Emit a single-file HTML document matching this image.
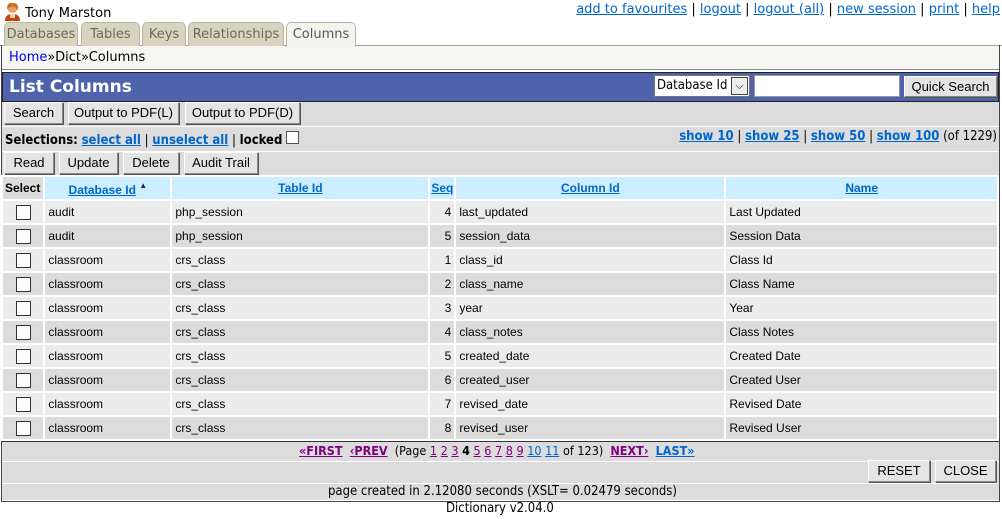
<!DOCTYPE html>
<html><head><meta charset="utf-8"><style>
*{margin:0;padding:0;box-sizing:border-box}
body{width:1002px;height:519px;background:#fff;position:relative;overflow:hidden;font-family:"DejaVu Sans",Verdana,sans-serif;font-size:13px;color:#000}
.a{position:absolute}
a{color:#0066cc;text-decoration:underline}
.tab{position:absolute;top:22px;height:24px;background:#d8d4c0;border:1px solid #b8b4a0;border-bottom:none;border-radius:5px 5px 0 0;color:#6e6a5a;font-size:13px;text-align:center;line-height:23px}
.btn{position:absolute;height:22px;background:#e4e4e4;border:1px solid #888;border-top-color:#fff;border-left-color:#fff;box-shadow:1px 1px 0 #555;font-family:"Liberation Sans",Arial,sans-serif;font-size:13px;text-align:center;line-height:20px}
table{border-collapse:separate;border-spacing:2px;font-family:"Liberation Sans",Arial,sans-serif;font-size:12px}
td,th{height:22px;padding:0 3px}
th{background:#cceeff;font-weight:bold}
th a{color:#0066cc}
tr.o td{background:#ececec}
tr.e td{background:#dcdcdc}
.cb{display:inline-block;width:15px;height:15px;background:#fff;border:1px solid #333;vertical-align:middle}
.cond{font-family:"DejaVu Sans Condensed","DejaVu Sans",sans-serif}
.p{color:#800080}
</style></head><body>
<svg class="a" style="left:4px;top:2px" width="17" height="19" viewBox="0 0 17 19"><circle cx="8.5" cy="6" r="5" fill="#e8a060"/><path d="M3 7 Q3 0 9 1 Q15 1 14 8 L12 6 Q9 3 5 6Z" fill="#c87020"/><path d="M1 19 Q1 12 8.5 12 Q16 12 16 19Z" fill="#c84010"/><rect x="6" y="12" width="5" height="4" fill="#f0d0b0"/></svg>
<div class="a" style="left:25px;top:6px;font-size:13px">Tony Marston</div>
<div class="a" style="right:2px;top:2px;font-size:13px;color:#000"><a href="#">add to favourites</a> | <a href="#">logout</a> | <a href="#">logout (all)</a> | <a href="#">new session</a> | <a href="#">print</a> | <a href="#">help</a></div>
<div class="a" style="left:0;top:45px;width:1002px;height:1px;background:#a8a490"></div>
<div class="tab" style="left:4px;width:74px">Databases</div>
<div class="tab" style="left:81px;width:59px">Tables</div>
<div class="tab" style="left:142px;width:44px">Keys</div>
<div class="tab" style="left:188px;width:96px">Relationships</div>
<div class="tab" style="left:286px;width:70px;height:25px;background:#f4f4ee;color:#555;z-index:2">Columns</div>
<div class="a" style="left:1px;top:45px;width:999px;height:457px;border:1px solid #444;border-top:none"></div>
<div class="a" style="left:2px;top:46px;width:997px;height:24px;background:#f6f6f2;border-bottom:1px solid #888"></div>
<div class="a" style="left:9px;top:50px"><a href="#" style="color:#0000ee;text-decoration:none">Home</a>»Dict»Columns</div>
<div class="a" style="left:2px;top:72px;width:997px;height:30px;background:#4f63ad;border:1px solid #222"></div>
<div class="a" style="left:9px;top:77px;color:#fff;font-weight:bold;font-size:17px">List Columns</div>
<div class="a cond" style="left:654px;top:75px;width:96px;height:22px;background:#fff;border:1px solid #777;font-size:13px;line-height:20px;padding-left:2px">Database Id<span style="position:absolute;right:1px;top:1px;width:17px;height:18px;border:1px solid #444;background:#eee;text-align:center;font-size:11px;line-height:16px">⌵</span></div>
<div class="a" style="left:754px;top:75px;width:146px;height:22px;background:#fff;border:1px solid #999"></div>
<div class="btn" style="left:904px;top:76px;width:93px;height:21px">Quick Search</div>
<div class="a" style="left:2px;top:102px;width:997px;height:398px;background:#dcdcdc"></div>
<div class="a" style="left:2px;top:126px;width:997px;height:1px;background:#fff"></div>
<div class="a" style="left:2px;top:151px;width:997px;height:1px;background:#fff"></div>
<div class="a" style="left:2px;top:176px;width:997px;height:1px;background:#333"></div>
<div class="btn" style="left:4px;top:102px;width:59px">Search</div>
<div class="btn" style="left:68px;top:102px;width:111px">Output to PDF(L)</div>
<div class="btn" style="left:185px;top:102px;width:115px">Output to PDF(D)</div>
<div class="a cond" style="left:5px;top:131px"><b>Selections:</b> <a href="#"><b>select all</b></a> | <a href="#"><b>unselect all</b></a> | <b>locked</b> <span class="cb" style="width:13px;height:13px;border-color:#555;vertical-align:0"></span></div>
<div class="a cond" style="right:5px;top:129px"><a href="#"><b>show 10</b></a> | <a href="#"><b>show 25</b></a> | <a href="#"><b>show 50</b></a> | <a href="#"><b>show 100</b></a> (of 1229)</div>
<div class="btn" style="left:4px;top:152px;width:50px">Read</div>
<div class="btn" style="left:59px;top:152px;width:59px">Update</div>
<div class="btn" style="left:123px;top:152px;width:56px">Delete</div>
<div class="btn" style="left:184px;top:152px;width:74px">Audit Trail</div>
<table class="a" style="left:1px;top:175px;width:998px;background:#fff">
<tr><th style="width:40px;background:#dcdcdc;text-align:left;padding-left:2px">Select</th><th style="width:125px;vertical-align:bottom;padding-bottom:2px"><a href="#">Database Id</a> <span style="font-size:8px;vertical-align:6px;color:#224">▲</span></th><th style="width:256px"><a href="#">Table Id</a></th><th style="width:24px;padding:0"><a href="#">Seq</a></th><th style="width:268px"><a href="#">Column Id</a></th><th><a href="#">Name</a></th></tr>
<tr class="o"><td style="text-align:center"><span class="cb"></span></td><td>audit</td><td>php_session</td><td style="text-align:right">4</td><td>last_updated</td><td>Last Updated</td></tr>
<tr class="e"><td style="text-align:center"><span class="cb"></span></td><td>audit</td><td>php_session</td><td style="text-align:right">5</td><td>session_data</td><td>Session Data</td></tr>
<tr class="o"><td style="text-align:center"><span class="cb"></span></td><td>classroom</td><td>crs_class</td><td style="text-align:right">1</td><td>class_id</td><td>Class Id</td></tr>
<tr class="e"><td style="text-align:center"><span class="cb"></span></td><td>classroom</td><td>crs_class</td><td style="text-align:right">2</td><td>class_name</td><td>Class Name</td></tr>
<tr class="o"><td style="text-align:center"><span class="cb"></span></td><td>classroom</td><td>crs_class</td><td style="text-align:right">3</td><td>year</td><td>Year</td></tr>
<tr class="e"><td style="text-align:center"><span class="cb"></span></td><td>classroom</td><td>crs_class</td><td style="text-align:right">4</td><td>class_notes</td><td>Class Notes</td></tr>
<tr class="o"><td style="text-align:center"><span class="cb"></span></td><td>classroom</td><td>crs_class</td><td style="text-align:right">5</td><td>created_date</td><td>Created Date</td></tr>
<tr class="e"><td style="text-align:center"><span class="cb"></span></td><td>classroom</td><td>crs_class</td><td style="text-align:right">6</td><td>created_user</td><td>Created User</td></tr>
<tr class="o"><td style="text-align:center"><span class="cb"></span></td><td>classroom</td><td>crs_class</td><td style="text-align:right">7</td><td>revised_date</td><td>Revised Date</td></tr>
<tr class="e"><td style="text-align:center"><span class="cb"></span></td><td>classroom</td><td>crs_class</td><td style="text-align:right">8</td><td>revised_user</td><td>Revised User</td></tr>
</table>
<div class="a" style="left:2px;top:441px;width:997px;height:1px;background:#333"></div>
<div class="a" style="left:2px;top:461px;width:997px;height:1px;background:#fff"></div>
<div class="a" style="left:2px;top:483px;width:997px;height:1px;background:#fff"></div>
<div class="a cond" style="left:299px;top:443px;font-size:12.5px"><a class="p" href="#"><b>«FIRST</b></a>&nbsp; <a class="p" href="#"><b>‹PREV</b></a>&nbsp; (Page <a class="p" href="#">1</a> <a class="p" href="#">2</a> <a class="p" href="#">3</a> <b>4</b> <a class="p" href="#">5</a> <a class="p" href="#">6</a> <a class="p" href="#">7</a> <a class="p" href="#">8</a> <a class="p" href="#">9</a> <a href="#">10</a> <a href="#">11</a> of 123)&nbsp; <a class="p" href="#"><b>NEXT›</b></a>&nbsp; <a href="#"><b>LAST»</b></a></div>
<div class="btn" style="left:868px;top:460px;width:62px">RESET</div>
<div class="btn" style="left:935px;top:460px;width:61px">CLOSE</div>
<div class="a cond" style="left:328px;top:484px;font-size:13px">page created in 2.12080 seconds (XSLT= 0.02479 seconds)</div>
<div class="a cond" style="left:446px;top:501px;font-size:13px">Dictionary v2.04.0</div>
</body></html>
